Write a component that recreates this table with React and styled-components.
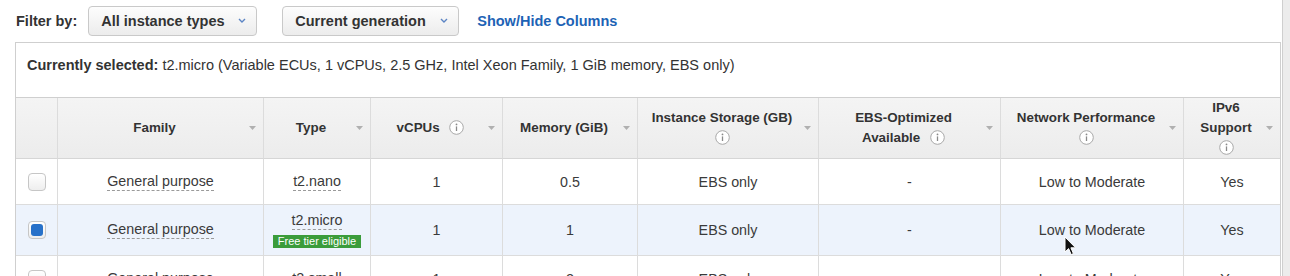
import styled, { createGlobalStyle } from "styled-components";

const GlobalStyle = createGlobalStyle`
  html, body {
    margin: 0;
    padding: 0;
    background: #fff;
  }
  body {
    font-family: "Liberation Sans", Arial, sans-serif;
    color: #333;
  }
`;

const COLUMNS = "41px 206px 107px 132px 135px 181px 182px 183px 97px";

const rows = [
    { family: "General purpose", type: "t2.nano", vcpu: "1", mem: "0.5", storage: "EBS only", ebs: "-", net: "Low to Moderate", ipv6: "Yes" },
    { family: "General purpose", type: "t2.micro", vcpu: "1", mem: "1", storage: "EBS only", ebs: "-", net: "Low to Moderate", ipv6: "Yes", selected: true, free: true },
    { family: "General purpose", type: "t2.small", vcpu: "1", mem: "2", storage: "EBS only", ebs: "-", net: "Low to Moderate", ipv6: "Yes" },
]

const Chevron = () => (
    <svg width="8" height="5" viewBox="0 0 8 5">
        <path d="M1 1 L4 4 L7 1" stroke="#5b84c4" strokeWidth="1.4" fill="none" />
    </svg>
)

const SortArrow = () => (
    <svg width="7" height="4" viewBox="0 0 7 4">
        <path d="M0 0 L7 0 L3.5 4 Z" fill="#b0b0b0" />
    </svg>
)

const InfoIcon = ({ inline }) => (
    <InfoWrap $inline={inline}>
        <svg width="15" height="15" viewBox="0 0 15 15">
            <circle cx="7.5" cy="7.5" r="6.8" fill="#fff" stroke="#a8a8a8" strokeWidth="1" />
            <circle cx="7.5" cy="4.4" r="0.9" fill="#8a8a8a" />
            <path d="M7.5 6.4 V11" stroke="#8a8a8a" strokeWidth="1.3" />
        </svg>
    </InfoWrap>
)

const Cursor = () => (
    <CursorWrap>
        <svg width="13" height="20" viewBox="0 0 13 20">
            <path d="M1 1 L1 16 L4.6 12.6 L7.2 18.6 L9.4 17.6 L6.9 11.8 L11.6 11.8 Z" fill="#111" stroke="#fff" strokeWidth="1" />
        </svg>
    </CursorWrap>
)

const App = () => {
    return (
        <Page>
            <GlobalStyle />
            <Main>
                <FilterBar>
                    <FilterLabel>Filter by:</FilterLabel>
                    <Select $width={169}>All instance types <Chevron /></Select>
                    <Select $width={177} $gap={25}>Current generation <Chevron /></Select>
                    <Link>Show/Hide Columns</Link>
                </FilterBar>

                <Selected>
                    <b>Currently selected:</b> t2.micro (Variable ECUs, 1 vCPUs, 2.5 GHz, Intel Xeon Family, 1 GiB memory, EBS only)
                </Selected>

                <Table>
                    <HeadRow>
                        <HeadCell />
                        <HeadCell>
                            <Label>Family</Label>
                            <SortArrow />
                        </HeadCell>
                        <HeadCell>
                            <Label>Type</Label>
                            <SortArrow />
                        </HeadCell>
                        <HeadCell>
                            <Label>vCPUs <InfoIcon inline /></Label>
                            <SortArrow />
                        </HeadCell>
                        <HeadCell>
                            <Label>Memory (GiB)</Label>
                            <SortArrow />
                        </HeadCell>
                        <HeadCell>
                            <Label>Instance Storage (GB)<br /><InfoIcon /></Label>
                            <SortArrow />
                        </HeadCell>
                        <HeadCell>
                            <Label>EBS-Optimized<br />Available <InfoIcon inline /></Label>
                            <SortArrow />
                        </HeadCell>
                        <HeadCell>
                            <Label>Network Performance<br /><InfoIcon /></Label>
                            <SortArrow />
                        </HeadCell>
                        <HeadCell>
                            <Label>IPv6<br />Support<br /><InfoIcon /></Label>
                            <SortArrow />
                        </HeadCell>
                    </HeadRow>

                    {rows.map((r, i) => (
                        <Row key={i} $selected={r.selected} $height={r.free ? 50 : 45}>
                            <Cell><Checkbox $checked={r.selected} /></Cell>
                            <Cell><Dashed>{r.family}</Dashed></Cell>
                            <Cell>
                                <Dashed>{r.type}</Dashed>
                                {r.free && <Badge>Free tier eligible</Badge>}
                            </Cell>
                            <Cell>{r.vcpu}</Cell>
                            <Cell>{r.mem}</Cell>
                            <Cell>{r.storage}</Cell>
                            <Cell>{r.ebs}</Cell>
                            <Cell>{r.net}</Cell>
                            <Cell>{r.ipv6}</Cell>
                        </Row>
                    ))}
                </Table>
            </Main>
            <Scrollbar />
            <Cursor />
        </Page>
    )
}

export default App;

const Page = styled.div`
    position: relative;
    display: flex;
    width: 1290px;
    height: 276px;
    overflow: hidden;
`

const Main = styled.div`
    flex: 1;
    padding: 0 1px 0 15px;
`

const Scrollbar = styled.div`
    width: 7px;
    background: #ececec;
    border-left: 1px solid #cfcfcf;
`

const FilterBar = styled.div`
    display: flex;
    align-items: center;
    height: 41px;
    padding: 0 0 1px 1px;
    white-space: nowrap;
`

const FilterLabel = styled.span`
    font-size: 14.5px;
    font-weight: bold;
    color: #333;
    margin-right: 11px;
`

const Select = styled.div`
    display: flex;
    align-items: center;
    justify-content: space-between;
    box-sizing: border-box;
    width: ${p => p.$width}px;
    height: 30px;
    margin-left: ${p => p.$gap || 0}px;
    padding: 0 10px 0 12px;
    border: 1px solid #c9c9c9;
    border-radius: 4px;
    background: linear-gradient(#fdfdfd, #ececec);
    font-size: 14.5px;
    font-weight: bold;
    color: #333;
`

const Link = styled.span`
    margin-left: 18px;
    font-size: 14.5px;
    font-weight: bold;
    color: #1d63b5;
`

const Selected = styled.div`
    box-sizing: border-box;
    height: 55px;
    padding: 14px 0 0 11px;
    border: 1px solid #cfcfcf;
    border-bottom: none;
    font-size: 14.5px;
    color: #333;
    white-space: nowrap;
`

const Table = styled.div`
    border: 1px solid #cfcfcf;
    border-bottom: none;
`

const HeadRow = styled.div`
    display: grid;
    grid-template-columns: ${COLUMNS};
    background: linear-gradient(#f4f4f4, #ececec);
`

const HeadCell = styled.div`
    display: flex;
    align-items: center;
    height: 60px;
    padding: 0 7px 0 2px;
    border-bottom: 1px solid #d6d6d6;

    &:not(:first-child) {
        border-left: 1px solid #dcdcdc;
    }
`

const Label = styled.div`
    flex: 1;
    text-align: center;
    font-size: 13.4px;
    font-weight: bold;
    line-height: 20px;
    color: #333;
`

const InfoWrap = styled.span`
    display: inline-block;
    width: 15px;
    height: 15px;
    margin-left: ${p => (p.$inline ? "6px" : "0")};
    vertical-align: -3px;

    svg {
        display: block;
    }
`

const Row = styled.div`
    display: grid;
    grid-template-columns: ${COLUMNS};
    background: ${p => (p.$selected ? "#edf3fc" : "#fff")};

    & > div {
        height: ${p => p.$height}px;
    }
`

const Cell = styled.div`
    display: flex;
    flex-direction: column;
    align-items: center;
    justify-content: center;
    border-bottom: 1px solid #dcdcdc;
    font-size: 14.3px;
    color: #3a3a3a;

    &:not(:first-child) {
        border-left: 1px solid #dcdcdc;
    }
`

const Dashed = styled.span`
    line-height: 16px;
    padding-bottom: 1px;
    border-bottom: 1px dashed #9a9a9a;
`

const Badge = styled.span`
    margin-top: 5px;
    padding: 0 5px;
    background: #3b9c3b;
    color: #fff;
    font-size: 11px;
    line-height: 13px;
`

const Checkbox = styled.span`
    box-sizing: border-box;
    width: 18px;
    height: 18px;
    padding: 2px;
    border: 1px solid #c6c6c6;
    border-radius: 4px;
    background: linear-gradient(#ffffff, #eeeeee);

    &::after {
        content: "";
        display: ${p => (p.$checked ? "block" : "none")};
        width: 100%;
        height: 100%;
        border-radius: 3px;
        background: #2771c9;
    }
`

const CursorWrap = styled.div`
    position: absolute;
    left: 1064px;
    top: 236px;
`
